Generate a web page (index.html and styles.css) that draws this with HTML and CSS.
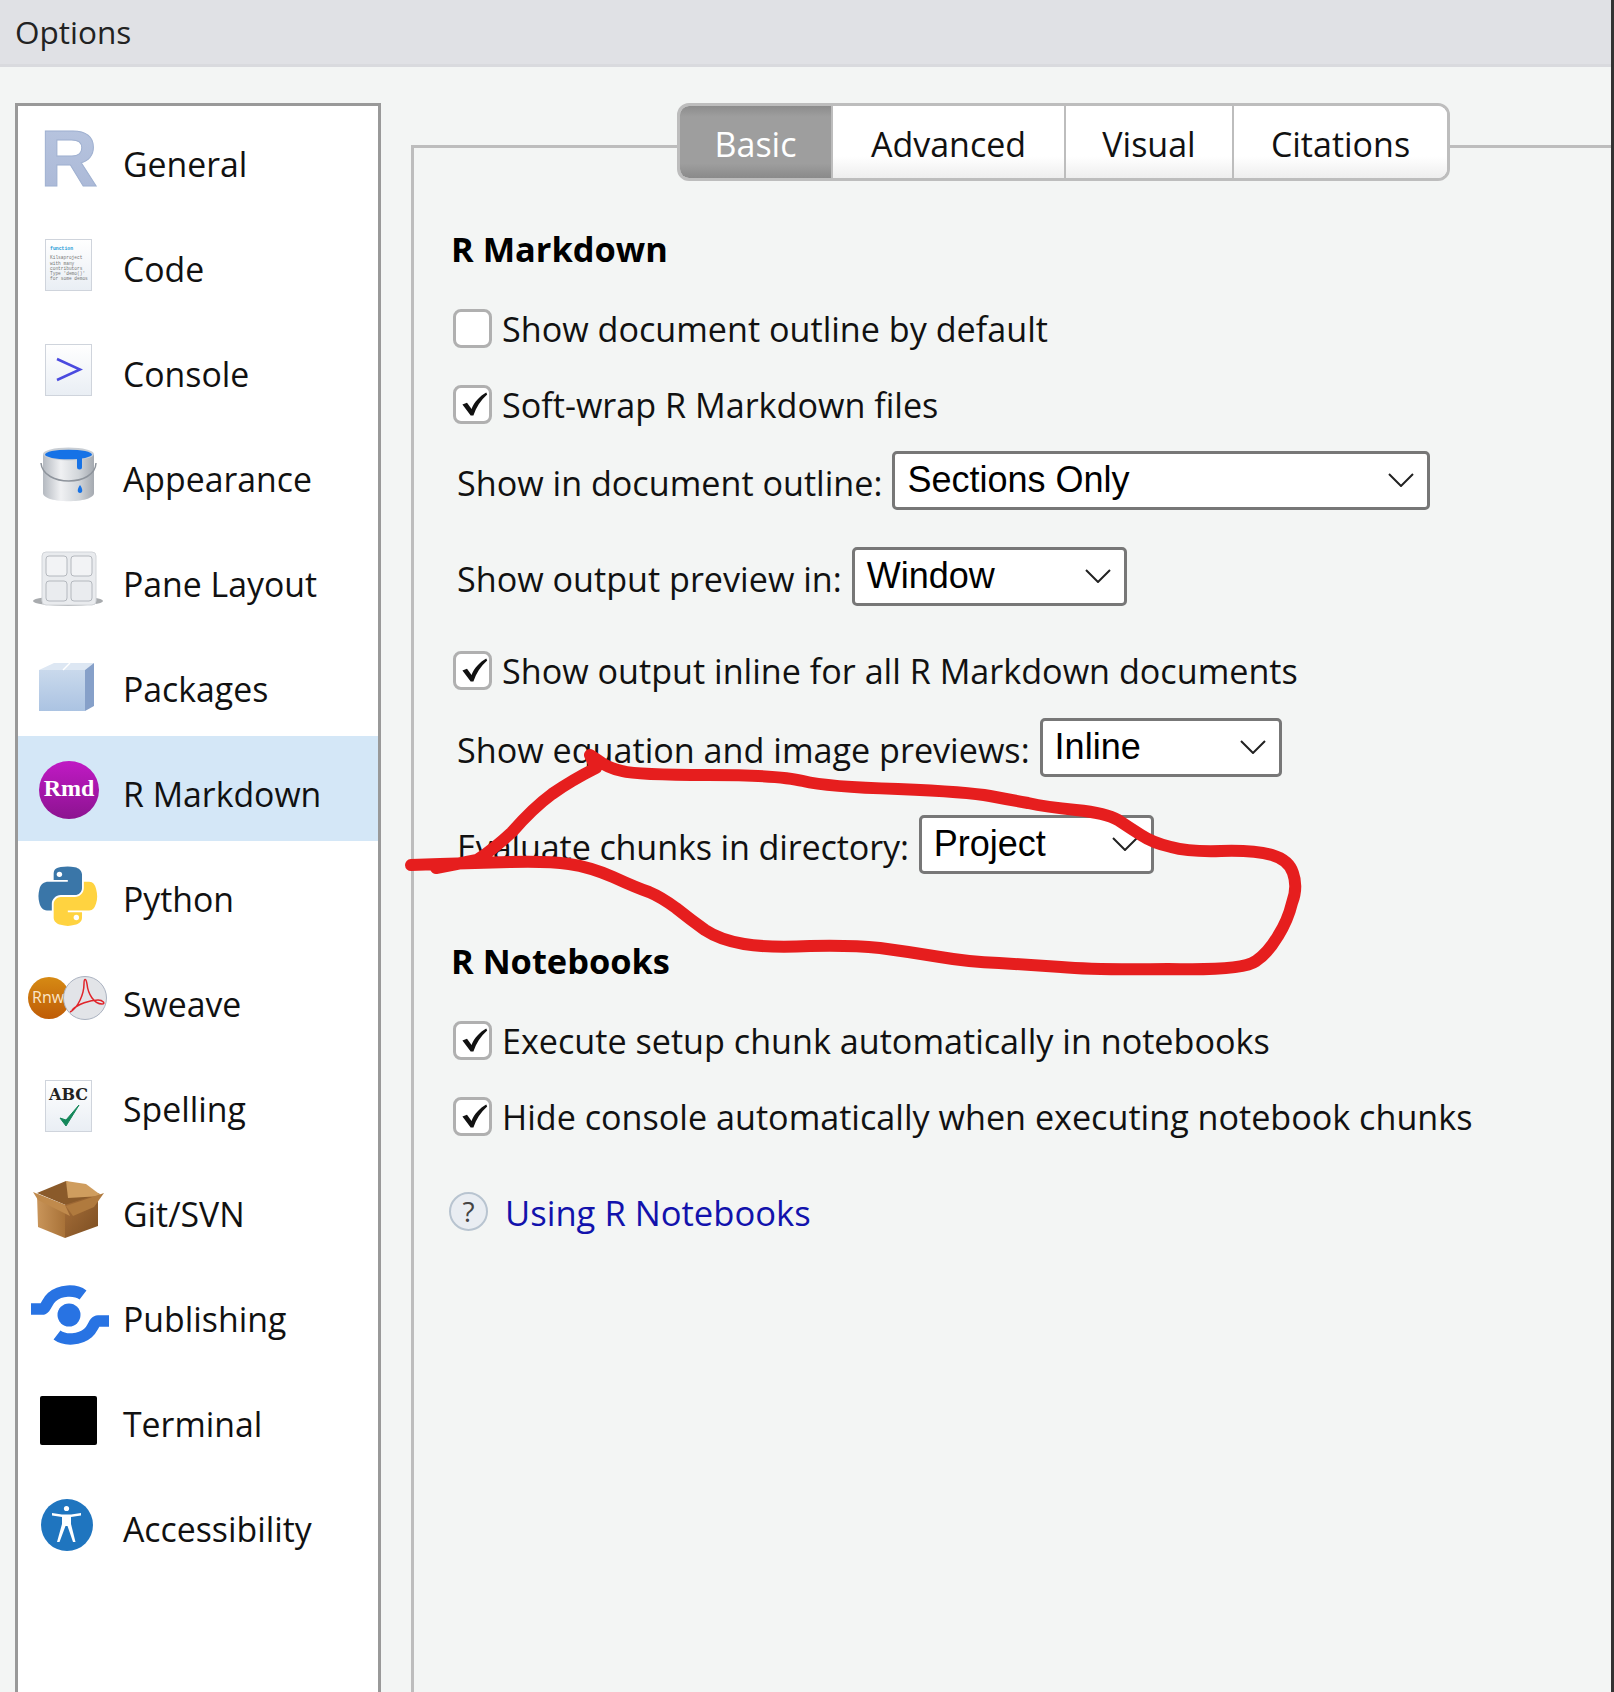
FILE: index.html
```html
<!DOCTYPE html>
<html>
<head>
<meta charset="utf-8" />
<title>Options</title>
<link rel="stylesheet" href="styles.css">
</head>
<body>
<div class="titlebar">Options</div>
<div class="dialog">
	<ul class="side">
		<li>
			<svg class="ico" viewBox="0 0 106 105"><defs><linearGradient id="rg" x1="0" y1="0" x2="0" y2="1"><stop offset="0" stop-color="#b9c6e0"/><stop offset="1" stop-color="#a9b7d6"/></linearGradient></defs><text x="22" y="80" class="ico-r" fill="url(#rg)" stroke="#9fb0d0" stroke-width="1">R</text></svg>
			General
		</li>
		<li>
			<svg class="ico" viewBox="0 0 106 105"><defs><linearGradient id="doc" x1="0" y1="0" x2="0" y2="1"><stop offset="0" stop-color="#fff"/><stop offset="1" stop-color="#e9eef4"/></linearGradient></defs><rect x="27.500" y="28.500" width="46" height="51" fill="url(#doc)" stroke="#cfd4dc"/><text x="32" y="39" class="ico-code ico-fn">function</text><text x="32" y="48" class="ico-code">Kilsaproject</text><text x="32" y="54" class="ico-code">with many</text><text x="32" y="59" class="ico-code">contributors</text><text x="32" y="64" class="ico-code">Type 'demo()'</text><text x="32" y="69" class="ico-code">for some demos</text></svg>
			Code
		</li>
		<li>
			<svg class="ico" viewBox="0 0 106 105"><rect x="27.500" y="28.500" width="46" height="51" fill="url(#doc)" stroke="#cfd4dc"/><path d="M39 43 L62 53.500 L39 64" fill="none" stroke="#4a4adf" stroke-width="2.500"/></svg>
			Console
		</li>
		<li>
			<svg class="ico" viewBox="0 0 106 105"><defs><linearGradient id="tin" x1="0" y1="0" x2="1" y2="0"><stop offset="0" stop-color="#b4b9c0"/><stop offset=".35" stop-color="#f0f1f3"/><stop offset=".7" stop-color="#d2d6da"/><stop offset="1" stop-color="#a4a9b0"/></linearGradient></defs><path d="M25 33 V72 C25 83 76 83 76 72 V33 Z" fill="url(#tin)"/><ellipse cx="50.500" cy="33" rx="25.500" ry="6.500" fill="#c9ced4"/><ellipse cx="50.500" cy="33.500" rx="23.500" ry="4.800" fill="#1672e6"/><path d="M23 42 C25 66 77 66 78 42" fill="none" stroke="#8e949c" stroke-width="1.500"/><path d="M59 36 h5 v10 a2.500 2.500 0 0 1 -5 0 Z" fill="#1672e6"/><path d="M62 64 c3 4 3 8 0 8 c-3 0 -3 -4 0 -8 Z" fill="#1672e6"/></svg>
			Appearance
		</li>
		<li>
			<svg class="ico" viewBox="0 0 106 105"><ellipse cx="50" cy="75" rx="35" ry="5" fill="#a8abae"/><rect x="24" y="26" width="54" height="53" rx="4" fill="#e9ebee" stroke="#d2d5d9"/><rect x="28" y="30" width="21" height="20" rx="3" fill="#f2f3f5" stroke="#b4b8be"/><rect x="53" y="30" width="21" height="20" rx="3" fill="#f2f3f5" stroke="#b4b8be"/><rect x="28" y="55" width="21" height="20" rx="3" fill="#eaecef" stroke="#b4b8be"/><rect x="53" y="55" width="21" height="20" rx="3" fill="#eaecef" stroke="#b4b8be"/></svg>
			Pane Layout
		</li>
		<li>
			<svg class="ico" viewBox="0 0 106 105"><defs><linearGradient id="pk" x1="0" y1="0" x2="0" y2="1"><stop offset="0" stop-color="#c9d9ec"/><stop offset="1" stop-color="#abc3e2"/></linearGradient></defs><path d="M21 39 L36 32 H76 L67 39 Z" fill="#dde7f3"/><path d="M21 39 H67 V80 H21 Z" fill="url(#pk)"/><path d="M67 39 L76 32 V75 L67 80 Z" fill="#86a0c9"/><path d="M45 39 L52 32" stroke="#fff" stroke-width="1.500"/></svg>
			Packages
		</li>
		<li class="sel">
			<svg class="ico" viewBox="0 0 106 105"><defs><linearGradient id="rm" x1="0" y1="0" x2="0" y2="1"><stop offset="0" stop-color="#c01ac4"/><stop offset="1" stop-color="#8c1390"/></linearGradient></defs><ellipse cx="51" cy="54" rx="30" ry="29" fill="url(#rm)"/><text x="51" y="60" text-anchor="middle" class="ico-rmd">Rmd</text></svg>
			R Markdown
		</li>
		<li>
			<svg class="ico" viewBox="0 0 106 105"><g transform="translate(20 25) scale(.54)"><path d="M54.900 .9 C50.400 .9 46 1.300 42.200 2 C31 4 29 8.100 29 15.700 V25.800 H55.200 V29.100 H19.100 C11.500 29.100 4.800 33.700 2.700 42.400 C.3 52.400 .2 58.600 2.700 69 C4.600 76.700 9 82.200 16.600 82.200 H25.600 V70.200 C25.600 61.500 33.100 53.900 42.200 53.900 H68.400 C75.700 53.900 81.500 47.900 81.500 40.600 V15.700 C81.500 8.600 75.500 3.300 68.400 2.100 C63.900 1.400 59.200 .9 54.900 .9 Z" fill="#3a76a8"/><path d="M84.900 29.100 V40.800 C84.900 49.800 77.200 57.400 68.400 57.400 H42.200 C35 57.400 29 63.600 29 70.800 V95.700 C29 102.800 35.200 107 42.200 109 C50.500 111.400 58.500 111.900 68.400 109 C75 107.100 81.500 103.200 81.500 95.700 V85.700 H55.200 V82.400 H94.500 C102.100 82.400 105 77.100 107.600 69 C110.300 60.700 110.200 52.800 107.600 42.400 C105.700 34.900 102.200 29.100 94.500 29.100 Z" fill="#ffd340"/><circle cx="39.700" cy="15.500" r="5" fill="#fff"/><circle cx="71" cy="95.500" r="5" fill="#fff"/></g></svg>
			Python
		</li>
		<li>
			<svg class="ico" viewBox="0 0 106 105"><defs><linearGradient id="rn" x1="0" y1="0" x2="0" y2="1"><stop offset="0" stop-color="#d68a14"/><stop offset="1" stop-color="#bf5c06"/></linearGradient></defs><circle cx="31" cy="52" r="21" fill="url(#rn)"/><text x="14" y="57" class="ico-rnw">Rnw</text><circle cx="67" cy="52" r="21.500" fill="#e2e4e8" stroke="#aab2c0" stroke-width="1"/><path d="M52 66 C60 62 66 48 66 38 C66 32 68 32 69 38 C70 48 76 58 84 58 C88 58 85 54 80 54 C72 54 60 58 54 64" fill="none" stroke="#e0242a" stroke-width="1.500"/></svg>
			Sweave
		</li>
		<li>
			<svg class="ico" viewBox="0 0 106 105"><rect x="27.500" y="29.500" width="46" height="51" fill="url(#doc)" stroke="#cfd4dc"/><text x="50.500" y="49" text-anchor="middle" class="ico-abc">ABC</text><path d="M42 67 L48 75 L61 54 L48 69 Z" fill="#14875a" stroke="#14875a" stroke-width="1"/></svg>
			Spelling
		</li>
		<li>
			<svg class="ico" viewBox="0 0 106 105"><defs><linearGradient id="bx1" x1="0" y1="0" x2="1" y2="0"><stop offset="0" stop-color="#c9955a"/><stop offset="1" stop-color="#a87238"/></linearGradient><linearGradient id="bx2" x1="0" y1="0" x2="1" y2="1"><stop offset="0" stop-color="#a8703a"/><stop offset="1" stop-color="#7c4e22"/></linearGradient></defs><path d="M19 37 L48 25 L82 38 L50 50 Z" fill="#8a5a2a"/><path d="M19 38 L47 49 V82 L20 71 Z" fill="url(#bx1)"/><path d="M47 49 L80 38 V70 L47 82 Z" fill="url(#bx2)"/><path d="M48 25 L50 42 L84 40 L68 28 Z" fill="#cf9d5e"/><path d="M15 36 L47 49 L52 60 L20 44 Z" fill="#c08a4c"/><path d="M48 50 L86 37 L76 51 L55 60 Z" fill="#b07a3e"/></svg>
			Git/SVN
		</li>
		<li>
			<svg class="ico" viewBox="0 0 106 105"><g fill="none" stroke="#2873e3" stroke-width="11.500"><path d="M13 48 H24 C28 48 29 40 34 36 C42 29 57 28 65 34" /><path d="M91 60 H80 C76 60 75 68 70 72 C62 79 47 80 39 74"/></g><circle cx="51" cy="54" r="11.500" fill="#2873e3"/></svg>
			Publishing
		</li>
		<li>
			<svg class="ico" viewBox="0 0 106 105"><rect x="22" y="30" width="57" height="49" rx="2" fill="#000"/></svg>
			Terminal
		</li>
		<li>
			<svg class="ico" viewBox="0 0 106 105"><circle cx="49" cy="54" r="26" fill="#1f75bf"/><circle cx="48.500" cy="37.500" r="2.600" fill="#fff"/><path d="M34 42 L44 43.500 H53 L63 42 V44.500 L53 46 V53 L57.500 71 H55 L49.500 55 H47.500 L41.500 71 H39 L44 53 V46 L34 44.500 Z" fill="#fff"/></svg>
			Accessibility
		</li>
	</ul>
	<div class="main">
		<div class="tabs">
			<div class="tab tab-on">Basic</div>
			<div class="tab tab-adv">Advanced</div>
			<div class="tab tab-vis">Visual</div>
			<div class="tab tab-cit">Citations</div>
		</div>
		<div class="pane">
			<div class="row head">R Markdown</div>
			<div class="row"><span class="cb"></span>Show document outline by default</div>
			<div class="row"><span class="cb"><svg viewBox="0 0 36 36"><path d="M7 18 L12 16 L17 23 C20 15 26 9 33 5 L34 7 C27 13 22 21 19 30 L16 30 Z" /></svg></span>Soft-wrap R Markdown files</div>
			<div class="row lbl">Show in document outline:
				<span class="select s1">Sections Only<svg viewBox="0 0 26 14"><path d="M1 1 L13 13 L25 1"/></svg></span></div>
			<div class="row lbl far">Show output preview in:
				<span class="select s2">Window<svg viewBox="0 0 26 14"><path d="M1 1 L13 13 L25 1"/></svg></span></div>
			<div class="row mt34"><span class="cb"><svg viewBox="0 0 36 36"><path d="M7 18 L12 16 L17 23 C20 15 26 9 33 5 L34 7 C27 13 22 21 19 30 L16 30 Z" /></svg></span>Show output inline for all R Markdown documents</div>
			<div class="row lbl mt17">Show equation and image previews:
				<span class="select s3">Inline<svg viewBox="0 0 26 14"><path d="M1 1 L13 13 L25 1"/></svg></span></div>
			<div class="row lbl mt37 tight">Evaluate chunks in directory:
				<span class="select s4">Project<svg viewBox="0 0 26 14"><path d="M1 1 L13 13 L25 1"/></svg></span></div>
			<div class="row head farther">R Notebooks</div>
			<div class="row"><span class="cb"><svg viewBox="0 0 36 36"><path d="M7 18 L12 16 L17 23 C20 15 26 9 33 5 L34 7 C27 13 22 21 19 30 L16 30 Z" /></svg></span>Execute setup chunk automatically in notebooks</div>
			<div class="row"><span class="cb"><svg viewBox="0 0 36 36"><path d="M7 18 L12 16 L17 23 C20 15 26 9 33 5 L34 7 C27 13 22 21 19 30 L16 30 Z" /></svg></span>Hide console automatically when executing notebook chunks</div>
			<div class="row far"><span class="help">?</span><a class="link" href="#">Using R Notebooks</a></div>
		</div>
	</div>
</div>
<!-- hand drawn red mark on top of the screenshot -->
<svg class="scribble" viewBox="0 0 1614 1692"><path d="M411 865 L440 864 Q471 863 510 862 Q548 861 569 864 Q590 867 613 877 Q637 888 649 892 Q661 897 676 908 Q691 920 705 930 Q720 940 744 944 Q768 948 810 946 Q851 945 880 948 Q910 952 940 957 Q969 962 999 963 Q1029 965 1061 967 Q1094 970 1168 969 Q1242 971 1256 961 Q1268 953 1278 936 Q1288 920 1292 903 Q1298 887 1293 873 Q1289 860 1272 855 Q1254 850 1221 851 Q1189 852 1171 847 Q1153 843 1141 835 Q1130 828 1118 820 Q1106 813 1076 810 Q1046 807 1028 803 Q1011 800 990 796 Q969 792 898 789 Q827 787 803 781 Q780 775 708 775 Q637 775 622 771 Q608 768 599 761 L590 755 L596 768 Q572 780 552 794 Q533 808 512 832 Q495 848 477 860 L436 868"/></svg>
</body>
</html>
```

FILE: styles.css
```css
*{
    box-sizing: border-box;
}
html,body{
    margin: 0;
    height: 1692px;
    overflow: hidden;
    background: #f3f5f4;
    font-family: "Open Sans", "Liberation Sans", sans-serif;
    color: #111;
}
body{
    border-right: 3px solid #333;
}
.titlebar{
    height: 67px;
    background: #e0e1e5;
    border-bottom: 3px solid #d9dade;
    padding-left: 15px;
    font-size: 31.500px;
    line-height: 63px;
    color: #222;
}
.dialog{
    display: flex;
    height: 1625px;
    padding: 36px 0 0 15px;
}
.side{
    width: 366px;
    flex: none;
    margin: 0;
    padding: 0;
    list-style-type: none;
    background: #fff;
    border: 3px solid #999;
    border-bottom: none;
}
.side li{
    display: flex;
    align-items: center;
    height: 105px;
    font-size: 33.800px;
    padding-top: 10px;
}
.side li.sel{
    background: #d4e7f7;
}
.ico{
    width: 106px;
    height: 105px;
    flex: none;
    margin: -10px -1px 0 0;
}
.ico-r{
    font: bold 80px "Liberation Sans", sans-serif;
}
.ico-code{
    font: 4.500px "Liberation Mono", monospace;
    fill: #777;
}
.ico-fn{
    fill: #1b9ad6;
    font-weight: bold;
    font-size: 4.800px;
}
.ico-rmd{
    font: bold 24px "Liberation Serif", serif;
    fill: #fff;
}
.ico-rnw{
    font: 16px "Open Sans", sans-serif;
    fill: #fbe6c8;
}
.ico-abc{
    font: bold 16px "DejaVu Serif", serif;
    fill: #222;
}
.main{
    flex: 1;
    margin: 42px 0 0 30px;
    border-left: 3px solid #bdbdbd;
    border-top: 3px solid #bdbdbd;
}
.tabs{
    display: flex;
    width: 773px;
    height: 78px;
    margin: -45px 0 0 263px;
    background: #fff;
    border: 3px solid #bdbdbd;
    border-radius: 12px;
    overflow: hidden;
    font-size: 34px;
}
.tab{
    display: flex;
    align-items: center;
    justify-content: center;
    padding-top: 4px;
    background: linear-gradient(#fff 70%, #eee);
    border-left: 2px solid #bdbdbd;
}
.tab-on{
    width: 151px;
    color: #fff;
    border-left: none;
    background: linear-gradient(#8c8c8c, #9e9e9e 15%, #9e9e9e 80%, #8a8a8a);
}
.tab-adv{
    width: 233px;
}
.tab-vis{
    width: 168px;
}
.tab-cit{
    flex: 1;
}
.pane{
    display: flex;
    flex-direction: column;
    padding: 37px 0 0 37px;
}
.row{
    display: flex;
    align-items: center;
    height: 60px;
    margin-top: 16px;
    font-size: 34.150px;
    white-space: nowrap;
}
.row.head{
    font-weight: bold;
    margin-top: 0;
    font-size: 34.400px;
    color: #000;
}
.head + .row{
    margin-top: 20px;
}
.row.far{
    margin-top: 36px;
}
.row.mt34{
    margin-top: 34px;
}
.row.mt17{
    margin-top: 17px;
}
.row.mt37{
    margin-top: 37px;
}
.row.head.farther{
    margin-top: 56px;
}
.row.lbl{
    padding: 4px 0 0 6px;
}
.tight{
    letter-spacing: -0.150px;
}
.cb{
    width: 39px;
    height: 39px;
    margin: 1px 10px 0 2px;
    background: #fff;
    border: 3px solid #b0b0b0;
    border-radius: 8px;
    flex: none;
}
.cb svg{
    display: block;
    width: 33px;
    height: 33px;
}
.cb path{
    fill: #111;
}
.select{
    display: flex;
    align-items: center;
    justify-content: space-between;
    height: 59px;
    margin: 0 0 4px 10px;
    padding: 0 13px 0 12px;
    background: #fff;
    border: 3px solid #777;
    border-radius: 5px;
    font-family: "Liberation Sans", sans-serif;
    font-size: 36px;
    letter-spacing: normal;
    color: #000;
}
.select svg{
    width: 26px;
    height: 14px;
}
.select path{
    fill: none;
    stroke: #222;
    stroke-width: 2px;
}
.s1{
    width: 538px;
}
.s2{
    width: 275px;
}
.s3{
    width: 242px;
}
.s4{
    width: 235px;
}
.help{
    display: flex;
    align-items: center;
    justify-content: center;
    width: 39px;
    height: 39px;
    margin: -2px 17px 0 -2px;
    border: 2px solid #b8c4d0;
    border-radius: 50%;
    background: #e9edf2;
    font-size: 28px;
    color: #444;
}
.link{
    color: #1212ac;
    font-size: 34.600px;
    text-decoration: none;
}
.scribble{
    position: absolute;
    left: 0;
    top: 0;
    width: 1614px;
    height: 1692px;
    pointer-events: none;
}
.scribble path{
    fill: none;
    stroke: #e61e1e;
    stroke-width: 12px;
    stroke-linecap: round;
    stroke-linejoin: round;
}
```
